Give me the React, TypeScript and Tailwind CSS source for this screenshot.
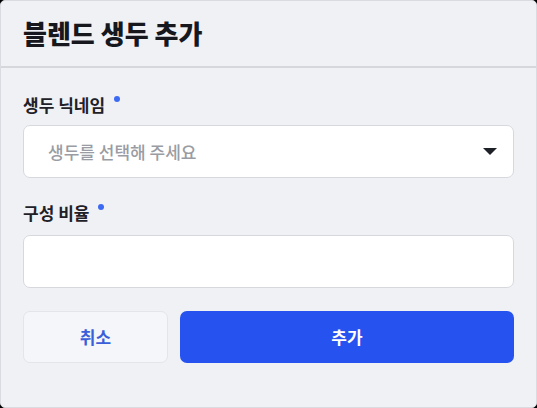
import { useState } from "react";

const font = "font-['Noto_Sans_CJK_KR','Noto_Sans',sans-serif]";

function Label({ text }: { text: string }) {
  return (
    <div className="flex h-5 items-start">
      <span className="text-[17px] leading-5 font-bold text-[#1f2128]">{text}</span>
      <span className="ml-[9px] mt-[1px] h-[6px] w-[6px] rounded-full bg-[#3d6af2]" />
    </div>
  );
}

export default function App() {
  const [ratio, setRatio] = useState("");

  return (
    <div className={`h-[408px] w-[537px] bg-black ${font}`}>
      <div className="flex h-full w-full flex-col overflow-hidden rounded-[5px] border border-[#d9dbe0] bg-[#f0f1f5]">
        <header className="flex h-[67px] items-center border-b-2 border-[#d5d7dc] px-[22px] pb-[2px]">
          <h1 className="text-[26px] leading-none font-extrabold text-[#16181d]">블렌드 생두 추가</h1>
        </header>

        <div className="flex flex-col px-[22px] pt-[27px]">
          <Label text="생두 닉네임" />
          <button className="mt-[10px] flex h-[53px] items-center justify-between rounded-[7px] border border-[#d6d8dd] bg-white pr-[16px] pl-[24px]">
            <span className="text-[17px] font-medium text-[#9a9ca3]">생두를 선택해 주세요</span>
            <svg width="14" height="7" viewBox="0 0 14 7">
              <path d="M0 0 H14 L7 7 Z" fill="#1e2027" />
            </svg>
          </button>

          <div className="mt-[25px]">
            <Label text="구성 비율" />
          </div>
          <input
            value={ratio}
            onChange={(event) => setRatio(event.target.value)}
            className="mt-[12px] h-[53px] rounded-[7px] border border-[#d6d8dd] bg-white px-[24px] text-[17px] outline-none"
          />

          <div className="mt-[23px] flex gap-[12px]">
            <button className="h-[52px] w-[145px] rounded-[7px] border border-[#e3e5ea] bg-[#f4f6fa] text-[17px] font-bold text-[#3b5fd9]">
              취소
            </button>
            <button className="h-[52px] flex-1 rounded-[7px] bg-[#2653f0] text-[17px] font-bold text-white">
              추가
            </button>
          </div>
        </div>
      </div>
    </div>
  );
}
